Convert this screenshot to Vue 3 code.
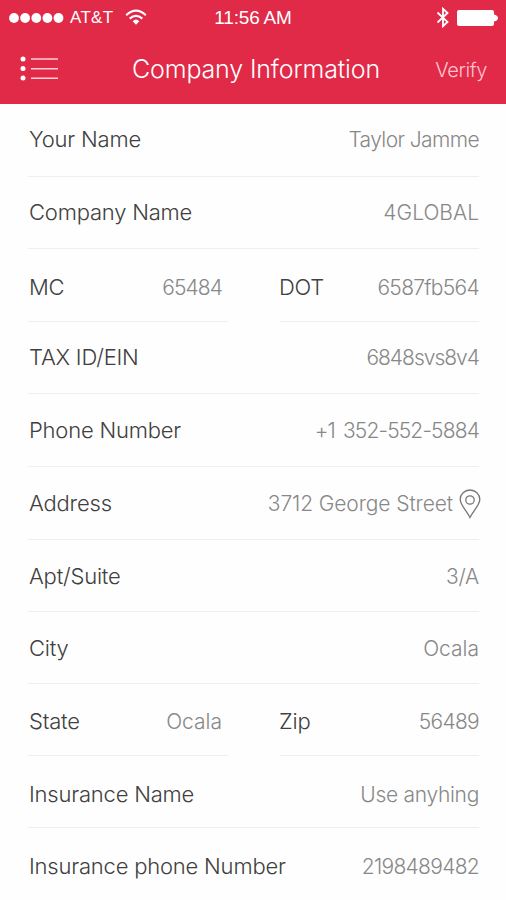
<script setup>
const rows = [
  { key: 'name', fields: [{ label: 'Your Name', value: 'Taylor Jamme' }] },
  { key: 'company', fields: [{ label: 'Company Name', value: '4GLOBAL' }] },
  { key: 'mc', fields: [{ label: 'MC', value: '65484' }, { label: 'DOT', value: '6587fb564' }] },
  { key: 'tax', fields: [{ label: 'TAX ID/EIN', value: '6848svs8v4' }] },
  { key: 'phone', fields: [{ label: 'Phone Number', value: '+1 352-552-5884' }] },
  { key: 'address', fields: [{ label: 'Address', value: '3712 George Street', pin: true }] },
  { key: 'apt', fields: [{ label: 'Apt/Suite', value: '3/A' }] },
  { key: 'city', fields: [{ label: 'City', value: 'Ocala' }] },
  { key: 'state', fields: [{ label: 'State', value: 'Ocala' }, { label: 'Zip', value: '56489' }] },
  { key: 'insurance', fields: [{ label: 'Insurance Name', value: 'Use anyhing' }] },
  { key: 'insphone', fields: [{ label: 'Insurance phone Number', value: '2198489482' }] },
]
</script>

<template>
  <main class="screen">
    <header class="top">
      <div class="status">
        <div class="carrier">
          <svg class="signal" width="56" height="12" viewBox="0 0 56 12" fill="#fff">
            <circle cx="6" cy="6" r="4.9" /><circle cx="17.1" cy="6" r="4.9" /><circle cx="28.3" cy="6" r="4.9" />
            <circle cx="39.4" cy="6" r="4.9" /><circle cx="50.5" cy="6" r="4.9" />
          </svg>
          <span class="network">AT&amp;T</span>
          <svg class="wifi" width="22" height="17" viewBox="0 0 22 17" fill="none" stroke="#fff" stroke-width="2.2">
            <path d="M1.2 6.2Q11-2.8 20.8 6.2" />
            <path d="M4.7 9.6Q11 4 17.3 9.6" />
            <path d="M7.6 12.2Q11 8.6 14.4 12.2L11 15.8Z" fill="#fff" stroke="none" />
          </svg>
        </div>
        <span class="time">11:56 AM</span>
        <div class="power">
          <svg width="14" height="21" viewBox="0 0 14 21" fill="none" stroke="#fff" stroke-width="1.8">
            <path d="M1.5 5.5L11.5 15L7 19.2V1.8L11.5 6L1.5 15.5" />
          </svg>
          <svg width="41" height="16" viewBox="0 0 41 16" fill="#fff">
            <rect width="37" height="16" rx="2" /><path d="M37 4.5Q41 5.5 41 8T37 11.5Z" />
          </svg>
        </div>
      </div>
      <nav class="bar">
        <svg class="menu" width="39" height="26" viewBox="0 0 39 26" fill="#fff">
          <circle cx="3" cy="3" r="2.5" /><circle cx="3" cy="12.5" r="2.5" /><circle cx="3" cy="22" r="2.5" />
          <path d="M11 3H38M11 12.8H38M11 22.3H38" stroke="#ffd0d8" stroke-width="1.6" />
        </svg>
        <h1 class="title">Company Information</h1>
        <a class="verify">Verify</a>
      </nav>
    </header>
    <section class="form">
      <div v-for="row in rows" :key="row.key" class="row" :class="'row-' + row.key">
        <div v-for="field in row.fields" :key="field.label" class="field">
          <span class="label">{{ field.label }}</span>
          <span class="value">{{ field.value }}</span>
          <svg v-if="field.pin" class="pin" width="22" height="30" viewBox="0 0 22 30" fill="none" stroke="#777" stroke-width="1.3">
            <path d="M11 28.5C8 22 1.2 16 1.2 10.5A9.8 9.5 0 0 1 20.8 10.5C20.8 16 14 22 11 28.5Z" />
            <circle cx="11" cy="11" r="4.2" />
          </svg>
        </div>
      </div>
    </section>
  </main>
</template>

<style>
body { margin: 0; background: #fefefe; }
</style>

<style scoped>
.screen { width: 506px; height: 900px; overflow: hidden; background: #fefefe; font-family: Inter, "Liberation Sans", sans-serif; font-weight: 300; }
.top { height: 104px; background: #e02a48; color: #fff; }
.status { display: grid; grid-template-columns: 1fr auto 1fr; align-items: center; height: 35px; padding: 0 8px 0 8px; }
.carrier { display: flex; align-items: center; }
.network { margin-left: 6px; font: 400 17px/20px "Liberation Sans", sans-serif; letter-spacing: 0.3px; }
.wifi { margin-left: 12px; }
.time { font: 400 19px/20px "Liberation Sans", sans-serif; letter-spacing: -0.2px; }
.power { display: flex; align-items: center; justify-content: flex-end; gap: 7px; }
.bar { display: grid; grid-template-columns: 112px 1fr 107px; align-items: center; height: 67px; padding: 0 19px 0 20px; }
.title { margin: 0; font-size: 25px; font-weight: 300; line-height: 30px; letter-spacing: -0.15px; white-space: nowrap; }
.verify { justify-self: end; padding-top: 3px; font-size: 20px; line-height: 24px; letter-spacing: -0.4px; color: #ffc4ce; }
.row { --drop: 22px; --track: -0.7px; display: grid; grid-template-columns: 1fr; height: 72px; margin: 0 27px 0 28px; }
.row-mc, .row-state { grid-template-columns: 200px 199px; justify-content: space-between; }
.field { display: flex; align-items: flex-end; box-sizing: border-box; border-bottom: 1px solid #efefef; padding: 0 0 var(--drop) 1px; }
.label { font-size: 22px; line-height: 28px; letter-spacing: -0.2px; color: #404040; white-space: nowrap; }
.value { margin-left: auto; font-size: 21px; line-height: 26px; letter-spacing: var(--track); color: #888; white-space: nowrap; }
.pin { margin: 0 -2px -2px 6px; }

.row-name { --drop: 23px; --track: -0.6px; height: 73px; }
.row-company { --drop: 22px; --track: 0; }
.row-mc { --drop: 20px; height: 73px; }
.row-tax { --track: -1px; }
.row-phone { --track: -0.85px; height: 73px; }
.row-phone .value { word-spacing: 3px; }
.row-address { --track: -0.1px; height: 73px; }
.row-apt { --drop: 21px; --track: -0.2px; }
.row-city { --drop: 21px; --track: 0; }
.row-state { --drop: 20px; --track: 0; }
.row-insurance { --drop: 19px; --track: -0.3px; }
.row-insphone { --drop: 20px; }
.row-insphone .field { border: 0; }
.row-state .field:last-child { --track: -0.7px; padding-left: 0; }
.row-mc .field:last-child { padding-left: 0; }
.row-mc .field:last-child .label, .row-state .field:last-child .label { margin-left: -1px; }
.row-mc .field:first-child { --track: -0.9px; }
.row-mc .field:first-child .value, .row-state .field:first-child .value { margin-right: 6px; }
</style>
